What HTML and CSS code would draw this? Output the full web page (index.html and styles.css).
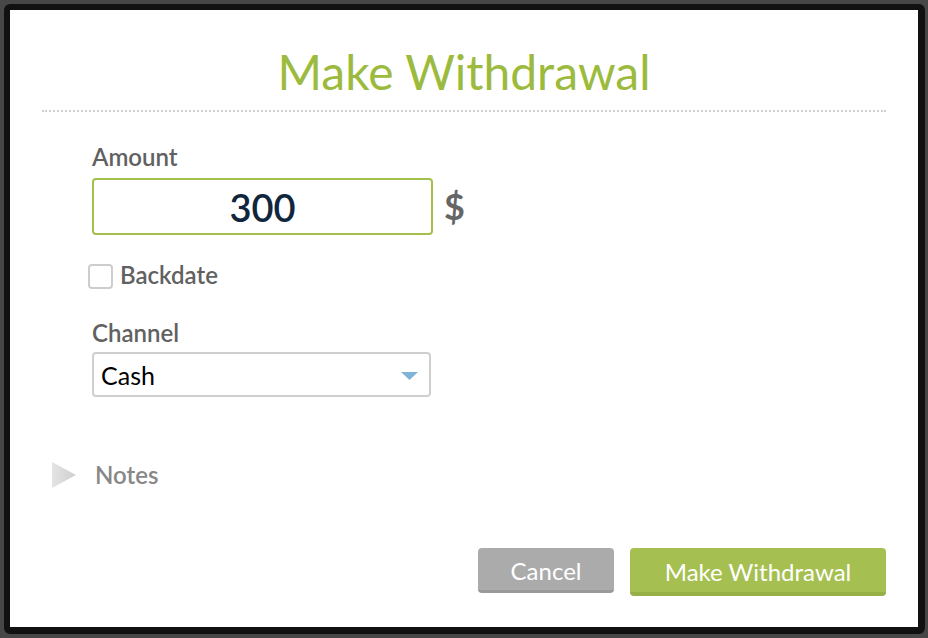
FILE: index.html
```html
<!DOCTYPE html>
<html lang="en">
<head>
<meta charset="utf-8">
<title>Make Withdrawal</title>
<link rel="stylesheet" href="styles.css">
</head>
<body>
<div class="frame">
  <div class="dialog">
    <h1 class="title">Make Withdrawal</h1>
    <div class="form">
      <div class="field-label label-amount">Amount</div>
      <div class="amount-row">
        <div class="amount-input">300</div>
        <span class="currency">$</span>
      </div>
      <label class="check-row">
        <span class="checkbox"></span>
        <span class="check-text">Backdate</span>
      </label>
      <div class="field-label label-channel">Channel</div>
      <div class="select">
        <span class="select-value">Cash</span>
        <svg class="select-arrow" width="17" height="8" viewBox="0 0 17 8"><path d="M0 0 H17 L8.5 8 Z" fill="#7fb3da"/></svg>
      </div>
    </div>
    <div class="notes">
      <svg class="notes-arrow" width="25" height="26" viewBox="0 0 25 26">
        <defs><linearGradient id="ng" x1="0" y1="0" x2="1" y2="0"><stop offset="0" stop-color="#e4e4e4"/><stop offset="1" stop-color="#cfcfcf"/></linearGradient></defs>
        <path d="M1 0 L25 13 L1 26 Z" fill="url(#ng)"/>
      </svg>
      <span class="notes-text">Notes</span>
    </div>
    <div class="actions">
      <button class="btn btn-cancel">Cancel</button>
      <button class="btn btn-primary">Make Withdrawal</button>
    </div>
  </div>
</div>
</body>
</html>
```
FILE: styles.css
```css
* { box-sizing: border-box; }
html, body { margin: 0; padding: 0; }
body {
  background: #474747;
  width: 928px;
  height: 638px;
  padding: 4px 3px 4px 4px;
  font-family: Lato, "Open Sans", sans-serif;
  overflow: hidden;
}
.frame {
  height: 630px;
  border: 6px solid #111;
  border-right-width: 7px;
  border-bottom-width: 7px;
  border-radius: 6px;
  background: #fff;
  overflow: hidden;
}
.dialog {
  display: flex;
  flex-direction: column;
  padding: 33px 32px 0 32px;
}
.title {
  margin: 0;
  font-size: 48px;
  line-height: 58px;
  font-weight: 400;
  color: #9cbb3e;
  text-align: center;
  padding-bottom: 9px;
  border-bottom: 2px dotted #cfcfcf;
}
.form {
  display: flex;
  flex-direction: column;
  align-items: flex-start;
  padding-left: 50px;
}
.field-label {
  font-size: 24px;
  line-height: 28px;
  font-weight: 600;
  color: #616161;
}
.label-amount { margin-top: 31px; }
.amount-row {
  display: flex;
  align-items: center;
  margin-top: 7px;
}
.amount-input {
  width: 341px;
  height: 57px;
  border: 2px solid #a3c04a;
  border-radius: 4px;
  text-align: center;
  font-size: 38px;
  line-height: 51px;
  padding-top: 2px;
  font-weight: 600;
  color: #10263d;
}
.currency {
  margin-left: 11px;
  font-size: 36px;
  font-weight: 700;
  color: #666;
  line-height: 40px;
  margin-top: -2px;
}
.check-row {
  display: flex;
  align-items: flex-start;
  margin-top: 26px;
  margin-left: -4px;
}
.checkbox {
  width: 25px;
  height: 25px;
  border: 2px solid #cdcdcd;
  border-radius: 4px;
  margin-top: 3px;
}
.check-text {
  margin-left: 7px;
  font-size: 24px;
  line-height: 28px;
  font-weight: 600;
  color: #616161;
}
.label-channel { margin-top: 30px; }
.select {
  margin-top: 5px;
  width: 339px;
  height: 45px;
  border: 2px solid #cfcfcf;
  border-radius: 4px;
  display: flex;
  align-items: center;
  justify-content: space-between;
  padding: 0 11px 0 7px;
}
.select-value {
  font-size: 25px;
  line-height: 30px;
  color: #000;
  margin-top: 1px;
}
.select-arrow { display: block; margin-top: 2px; }
.notes {
  display: flex;
  align-items: center;
  margin-top: 64px;
  margin-left: 9px;
}
.notes-arrow { display: block; }
.notes-text {
  margin-left: 19px;
  font-size: 24px;
  line-height: 28px;
  font-weight: 600;
  color: #888;
}
.actions {
  display: flex;
  justify-content: flex-end;
  align-items: flex-start;
  gap: 16px;
  margin-top: 59px;
}
.btn {
  font-family: Lato, "Open Sans", sans-serif;
  font-size: 24px;
  font-weight: 400;
  color: #fff;
  border: 0;
  border-radius: 4px;
  padding: 0;
  margin: 0;
}
.btn-cancel {
  width: 136px;
  height: 45px;
  background: #ababab;
  border-bottom: 3px solid #999;
  padding-top: 3px;
  line-height: 39px;
}
.btn-primary {
  width: 256px;
  height: 48px;
  background: #a5c050;
  border-bottom: 4px solid #97b046;
  padding-top: 3px;
  line-height: 41px;
}
```
